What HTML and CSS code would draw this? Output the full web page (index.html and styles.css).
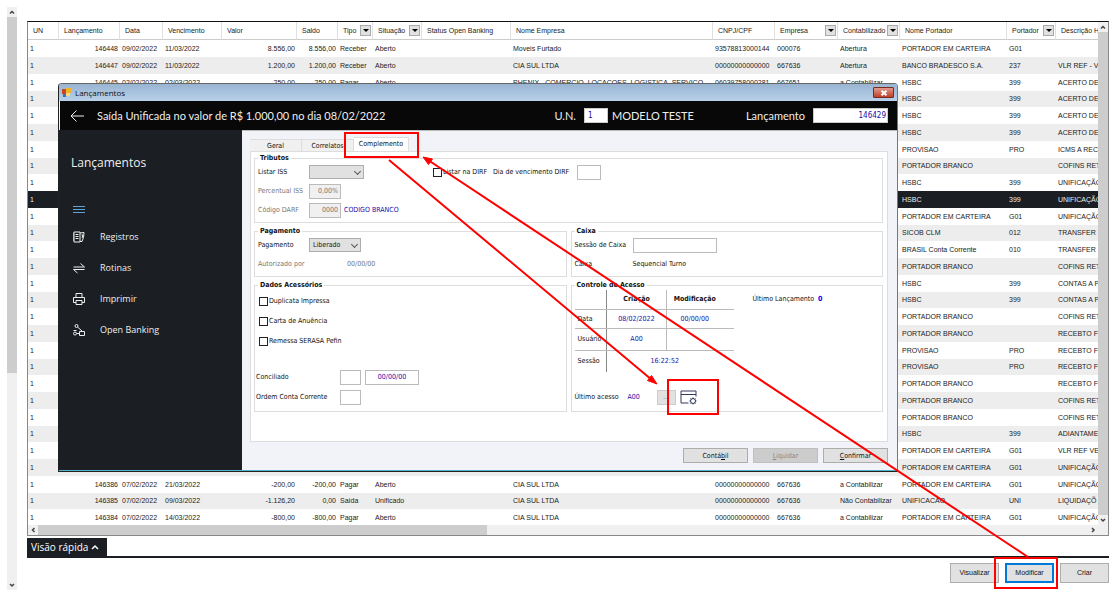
FILE: index.html
```html
<!DOCTYPE html>
<html lang="pt-BR">
<head>
    <meta charset="UTF-8">
    <meta name="viewport" content="width=device-width, initial-scale=1.0">
    <title>Lançamentos</title>
    <link rel="stylesheet" href="styles.css">
</head>
<body>
    <div class="page">
        <div class="scroll-v page-scroll">
            <svg class="chev" viewBox="0 0 10 10"><path d="M3 6.5 5 4.5 7 6.5"/></svg>
            <div class="thumb"></div>
            <svg class="chev chev-end" viewBox="0 0 10 10"><path d="M3 4 5 6 7 4"/></svg>
        </div>

        <main class="main">
            <div class="grid">
                <div class="grid-body">
                    <div class="grid-view">
                        <table class="entries">
                            <colgroup>
                                <col class="c-un"><col class="c-lanc"><col class="c-data"><col class="c-venc">
                                <col class="c-valor"><col class="c-saldo"><col class="c-tipo"><col class="c-sit">
                                <col class="c-status"><col class="c-nome"><col class="c-cnpj"><col class="c-emp">
                                <col class="c-cont"><col class="c-port"><col class="c-cod"><col>
                            </colgroup>
                            <thead>
                                <tr>
                                    <th>UN</th>
                                    <th>Lançamento</th>
                                    <th>Data</th>
                                    <th>Vencimento</th>
                                    <th>Valor</th>
                                    <th>Saldo</th>
                                    <th><div class="th">Tipo<button class="filter" aria-label="Filtrar tipo"></button></div></th>
                                    <th><div class="th">Situação<button class="filter" aria-label="Filtrar situação"></button></div></th>
                                    <th>Status Open Banking</th>
                                    <th>Nome Empresa</th>
                                    <th>CNPJ/CPF</th>
                                    <th><div class="th">Empresa<button class="filter" aria-label="Filtrar empresa"></button></div></th>
                                    <th><div class="th">Contabilizado<button class="filter" aria-label="Filtrar contabilizado"></button></div></th>
                                    <th>Nome Portador</th>
                                    <th><div class="th">Portador<button class="filter" aria-label="Filtrar portador"></button></div></th>
                                    <th>Descrição H</th>
                                </tr>
                            </thead>
                            <tbody id="rows"></tbody>
                        </table>
                    </div>
                    <div class="scroll-v">
                        <svg class="chev" viewBox="0 0 10 10"><path d="M3 6.5 5 4.5 7 6.5"/></svg>
                        <div class="thumb"></div>
                        <svg class="chev chev-end" viewBox="0 0 10 10"><path d="M3 4 5 6 7 4"/></svg>
                    </div>
                </div>
                <div class="scroll-h">
                    <svg class="chev" viewBox="0 0 10 10"><path d="M6.5 3 4.5 5 6.5 7"/></svg>
                    <div class="thumb"></div>
                    <svg class="chev chev-end" viewBox="0 0 10 10"><path d="M4 3 6 5 4 7"/></svg>
                </div>
            </div>

            <div class="quick">
                <button class="quick-tab">Visão rápida
                    <svg viewBox="0 0 8 6"><path d="M1 5 4 2 7 5"/></svg>
                </button>
            </div>

            <div class="actions">
                <button class="btn">Visualizar</button>
                <button class="btn btn-focus">Modificar</button>
                <button class="btn">Criar</button>
            </div>
        </main>
    </div>

    <section class="dialog" role="dialog" aria-label="Lançamentos">
        <div class="titlebar">
            <svg class="app-icon" viewBox="0 0 9 9">
                <rect x="0" y="1" width="4" height="5" fill="#c8452c"/>
                <rect x="4" y="0" width="5" height="5" fill="#f0b429"/>
                <rect x="1" y="6" width="3" height="3" fill="#3a6fc4"/>
                <rect x="4" y="5" width="4" height="3" fill="#f7dc7a"/>
            </svg>
            <span>Lançamentos</span>
            <button class="close" aria-label="Fechar">
                <svg viewBox="0 0 8 6"><path d="M1.5.8 6.5 5.2M6.5.8 1.5 5.2"/></svg>
            </button>
        </div>

        <header class="dialog-head">
            <svg class="back" viewBox="0 0 14 12"><path d="M14 6H1M6.5.5 1 6l5.5 5.5"/></svg>
            <h1>Saída Unificada no valor de R$ 1.000,00 no dia 08/02/2022</h1>
            <label for="un">U.N.</label>
            <input id="un" class="head-un" value="1">
            <span class="head-name">MODELO TESTE</span>
            <label for="lanc">Lançamento</label>
            <input id="lanc" class="head-lanc" value="146429">
        </header>

        <div class="dialog-body">
            <nav class="side">
                <h2>Lançamentos</h2>
                <svg class="menu" viewBox="0 0 12 7"><path d="M0 .5h12M0 3.5h12M0 6.5h12"/></svg>
                <a href="#registros">
                    <svg viewBox="0 0 12 12"><path d="M1 1h6v10H1zM2.5 3.5h3M2.5 5.5h3M2.5 7.5h3M0 2v8M7 2l4-.5-.5 5-1.5 4H7M8.500 4l1.500 0-1 3"/></svg>
                    Registros
                </a>
                <a href="#rotinas">
                    <svg viewBox="0 0 12 12"><path d="M.5 5h11L7.5 1.5M11.5 7.5H.5L4.5 11"/></svg>
                    Rotinas
                </a>
                <a href="#imprimir">
                    <svg viewBox="0 0 12 12"><path d="M3 4.5v-4h6v4M3 9.5H.5v-5h11v5H9M3 7.5h6v4H3z"/></svg>
                    Imprimir
                </a>
                <a href="#open-banking">
                    <svg viewBox="0 0 12 12"><circle cx="3.5" cy="2" r="1.5"/><circle cx="2" cy="9.5" r="1.5"/><path d="M4.5 3 9 7M3.5 9.5h3M6.5 7.5h5v4h-5zM.5 6.5h3"/></svg>
                    Open Banking
                </a>
            </nav>

            <form class="content">
                <div class="tabs" role="tablist">
                    <button type="button" role="tab">Geral</button>
                    <button type="button" role="tab">Correlatos</button>
                    <button type="button" role="tab" class="active" aria-selected="true">Complemento</button>
                </div>

                <div class="panel">
                    <fieldset class="wide">
                        <legend>Tributos</legend>
                        <div class="row">
                            <label class="lbl" for="iss">Listar ISS</label>
                            <span class="select select-iss"><select id="iss"><option></option></select></span>
                            <label class="check dirf"><input type="checkbox">Listar na DIRF</label>
                            <label for="dia">Dia de vencimento DIRF</label>
                            <input id="dia" class="field in-dia">
                        </div>
                        <div class="row">
                            <label class="lbl off" for="perc">Percentual ISS</label>
                            <input id="perc" class="field in-off" value="0,00%" disabled>
                        </div>
                        <div class="row">
                            <label class="lbl off" for="darf">Código DARF</label>
                            <input id="darf" class="field in-off" value="0000" disabled>
                            <span class="val darf-name">CODIGO BRANCO</span>
                        </div>
                    </fieldset>

                    <fieldset>
                        <legend>Pagamento</legend>
                        <div class="row">
                            <label class="lbl" for="pag">Pagamento</label>
                            <span class="select select-pag"><select id="pag"><option>Liberado</option></select></span>
                        </div>
                        <div class="row off">
                            <span class="lbl-auth">Autorizado por</span>
                            <span>00/00/00</span>
                        </div>
                    </fieldset>

                    <fieldset>
                        <legend>Caixa</legend>
                        <div class="row">
                            <label class="lbl-caixa" for="caixa">Sessão de Caixa</label>
                            <input id="caixa" class="field in-caixa">
                        </div>
                        <div class="row">
                            <span class="lbl-caixa">Caixa</span>
                            <span>Sequencial Turno</span>
                        </div>
                    </fieldset>

                    <fieldset class="extras">
                        <legend>Dados Acessórios</legend>
                        <div class="checks">
                            <label class="check"><input type="checkbox">Duplicata Impressa</label>
                            <label class="check"><input type="checkbox">Carta de Anuência</label>
                            <label class="check"><input type="checkbox">Remessa SERASA Pefin</label>
                        </div>
                        <div class="row">
                            <label class="lbl-extra" for="conc">Conciliado</label>
                            <input id="conc" class="field in-mini">
                            <input class="field in-date" value="00/00/00" aria-label="Data conciliado">
                        </div>
                        <div class="row">
                            <label class="lbl-extra" for="ordem">Ordem Conta Corrente</label>
                            <input id="ordem" class="field in-mini">
                        </div>
                    </fieldset>

                    <fieldset class="access">
                        <legend>Controle de Acesso</legend>
                        <div class="access-top">
                            <table class="log">
                                <tr><td></td><th>Criação</th><th>Modificação</th></tr>
                                <tr><td>Data</td><td class="val">08/02/2022</td><td class="val">00/00/00</td></tr>
                                <tr><td>Usuário</td><td class="val">A00</td><td></td></tr>
                                <tr><td>Sessão</td><td class="val" colspan="2">16:22:52</td></tr>
                            </table>
                            <p>Último Lançamento <b>0</b></p>
                        </div>
                        <div class="row">
                            <span class="lbl-last">Último acesso</span>
                            <span class="val last-user">A00</span>
                            <button type="button" class="more">...</button>
                            <svg class="window-icon" viewBox="0 0 17 15">
                                <path d="M8.5 13H1V1h15v5.500M1 4.500h15"/>
                                <circle cx="13" cy="11" r="2.500"/>
                                <path d="M13 7.500v1.500M13 13v1.500M9.500 11H11M15 11h1.500M10.500 8.500l1 1M14.500 12.500l1 1M15.500 8.500l-1 1M11.500 12.500l-1 1"/>
                            </svg>
                        </div>
                    </fieldset>
                </div>

                <div class="dialog-actions">
                    <button type="button" class="btn">Contá<u>b</u>il</button>
                    <button type="button" class="btn" disabled><u>L</u>iquidar</button>
                    <button type="button" class="btn"><u>C</u>onfirmar</button>
                </div>
            </form>
        </div>
    </section>

    <svg class="marks" width="1117" height="595" viewBox="0 0 1117 595" aria-hidden="true">
        <rect x="345" y="133" width="73" height="24"/>
        <rect x="668" y="380" width="50" height="34"/>
        <rect x="995" y="558" width="62" height="30"/>
        <path d="M389 160 652 380M1028 557 428 160"/>
        <path class="tip" d="M657 384 647.5 380.5 651.5 375.5zM423 157 428.5 164.5 432.5 159z"/>
    </svg>

    <script src="script.js"></script>
</body>
</html>
```

FILE: styles.css
```css
* {
    box-sizing: border-box;
}
body {
    margin: 0;
    background: #fff;
    color: #111;
    font-family: "DejaVu Sans Condensed", "DejaVu Sans", sans-serif;
    font-size: 7px;
    line-height: 10px;
}
button,
input,
select {
    font: inherit;
    color: inherit;
    margin: 0;
    padding: 0;
    border-radius: 0;
}
svg {
    fill: none;
    stroke: currentColor;
    flex: none;
}
.page {
    display: flex;
    gap: 10px;
    height: 100vh;
    padding: 7px 8px 5px 7px;
}

/* scrollbars */
.scroll-v {
    display: flex;
    flex-direction: column;
    flex: none;
    width: 10px;
    background: #f0f0f0;
    color: #444;
}
.scroll-h {
    display: flex;
    flex: none;
    height: 10px;
    padding-right: 10px;
    background: #f0f0f0;
    color: #444;
}
.chev {
    width: 10px;
    height: 10px;
    stroke-width: 1.5;
}
.chev-end {
    margin-top: auto;
}
.scroll-h .chev-end {
    margin: 0 0 0 auto;
}
.thumb {
    background: #cdcdcd;
}
.page-scroll .thumb {
    height: 61%;
}
.grid .scroll-v .thumb {
    flex: 1;
}
.scroll-h .thumb {
    width: 42%;
}

/* entries grid */
.main {
    display: flex;
    flex-direction: column;
    flex: 1;
    min-width: 0;
    padding-top: 14px;
}
.grid {
    display: flex;
    flex-direction: column;
    flex: 1;
    min-height: 0;
    border: 1px solid #888;
    border-top-color: #111;
}
.grid-body {
    display: flex;
    flex: 1;
    min-height: 0;
}
.grid-view {
    flex: 1;
    min-width: 0;
    overflow: hidden;
}
.entries {
    width: 100%;
    table-layout: fixed;
    border-collapse: separate;
    border-spacing: 0;
    font-family: "Liberation Sans", Arial, sans-serif;
    color: #222;
}
.c-un { width: 31px; }
.c-lanc { width: 61px; }
.c-data { width: 43px; }
.c-venc { width: 59px; }
.c-valor { width: 75px; }
.c-saldo { width: 41px; }
.c-tipo { width: 35px; }
.c-sit { width: 49px; }
.c-status { width: 89px; }
.c-nome { width: 202px; }
.c-cnpj { width: 62px; }
.c-emp { width: 63px; }
.c-cont { width: 62px; }
.c-port { width: 107px; }
.c-cod { width: 49px; }
.entries th {
    height: 18px;
    padding: 0 0 0 5px;
    border-right: 1px solid #e0e0e0;
    border-bottom: 1px solid #ccc;
    font-weight: normal;
    text-align: left;
    white-space: nowrap;
    overflow: hidden;
}
.entries th:last-child {
    border-right: 0;
}
.th {
    display: flex;
    justify-content: space-between;
    align-items: center;
    padding-right: 1px;
}
.filter {
    display: grid;
    place-items: center;
    width: 11px;
    height: 11px;
    border: 1px solid #aaa;
    background: #e1e1e1;
}
.filter::after {
    content: "";
    border: 3px solid transparent;
    border-top-color: #000;
    border-bottom: 0;
}
.entries td {
    height: 17px;
    padding: 0 2px;
    white-space: nowrap;
    overflow: hidden;
}
.entries tr:nth-child(4n) td {
    height: 16px;
}
.entries tbody tr:nth-child(even) {
    background: #ededed;
}
.entries tbody tr.selected {
    background: #1b1e23;
    color: #eee;
}
.entries .num {
    text-align: right;
}

/* quick view and page buttons */
.quick {
    margin-top: 2px;
    border-bottom: 2px solid #1b1e23;
}
.quick-tab {
    display: flex;
    align-items: center;
    gap: 3px;
    height: 18px;
    padding: 0 8px 0 4px;
    border: 0;
    background: #1b1e23;
    color: #fff;
    font-family: "Open Sans", sans-serif;
    font-size: 10px;
}
.quick-tab svg {
    width: 8px;
    height: 6px;
    stroke-width: 1.5;
}
.actions {
    display: flex;
    justify-content: flex-end;
    gap: 6px;
    padding: 5px 0 7px;
}
.btn {
    border: 1px solid #adadad;
    background: #e1e1e1;
    text-align: center;
}
.actions .btn {
    width: 49px;
    height: 20px;
    font-family: "Liberation Sans", Arial, sans-serif;
}
.actions .btn-focus {
    border: 2px solid #0078d7;
}

/* dialog */
.dialog {
    position: absolute;
    top: 83px;
    left: 58px;
    right: 219px;
    border: 1px solid #222;
    border-top-color: #666;
    border-right-color: #3b8ba5;
    border-radius: 4px 4px 0 0;
    background: #f2f3f8;
}
.titlebar {
    display: flex;
    align-items: center;
    gap: 4px;
    height: 17px;
    padding: 0 3px;
    border-radius: 3px 3px 0 0;
    background: linear-gradient(#98b4d2, #b9d1ea);
    font-family: "Open Sans", sans-serif;
    font-size: 8px;
}
.app-icon {
    width: 9px;
    height: 9px;
    stroke: none;
}
.close {
    display: grid;
    place-items: center;
    width: 21px;
    height: 11px;
    margin-left: auto;
    border: 1px solid #7b2a20;
    border-radius: 1px;
    background: linear-gradient(#e09a8c, #c0402a);
    color: #fff;
}
.close svg {
    width: 8px;
    height: 6px;
    stroke-width: 2;
}
.dialog-head {
    display: flex;
    align-items: center;
    height: 29px;
    margin-left: 1px;
    padding: 0 9px 0 10px;
    background: #080808;
    color: #eee;
    font-family: Lato, "Open Sans", sans-serif;
    font-size: 11px;
}
.back {
    width: 14px;
    height: 12px;
}
.dialog-head h1 {
    flex: 1;
    margin: 0 0 0 13px;
    font-size: inherit;
    font-weight: normal;
    white-space: nowrap;
}
.dialog-head input {
    height: 15px;
    padding: 0 3px;
    border: 1px solid #ccc;
    background: #fff;
    color: #1a0dab;
    font-family: "DejaVu Sans Condensed", "DejaVu Sans", sans-serif;
    font-size: 8px;
}
.dialog-head .head-un {
    width: 24px;
    margin: 0 4px 0 8px;
}
.head-name {
    width: 134px;
    white-space: nowrap;
}
.dialog-head .head-lanc {
    width: 75px;
    margin-left: 8px;
    padding-right: 1px;
    text-align: right;
}
.dialog-body {
    display: flex;
    border-top: 1px solid #bbb;
    border-bottom: 1px solid #4fb3cc;
}

/* side menu */
.side {
    display: flex;
    flex-direction: column;
    flex: none;
    width: 183px;
    margin-top: -1px;
    padding: 24px 12px 0;
    background: #1b1e23;
    color: #eee;
    font-family: "Open Sans", sans-serif;
}
.side h2 {
    margin: 0;
    font-size: 12px;
    line-height: 18px;
    font-weight: normal;
}
.menu {
    width: 12px;
    height: 7px;
    margin: 34px 0 12px 2px;
    color: #5fa3d8;
}
.side a {
    display: flex;
    align-items: center;
    gap: 15px;
    height: 24px;
    margin-bottom: 7px;
    padding-left: 2px;
    color: inherit;
    font-size: 9px;
    text-decoration: none;
}
.side a svg {
    width: 12px;
    height: 12px;
}

/* form */
.content {
    flex: 1;
    min-width: 0;
    padding: 6px 9px 7px 8px;
}
.tabs {
    display: flex;
    align-items: flex-end;
}
.tabs button {
    width: 52px;
    height: 12px;
    border: 1px solid #ddd;
    border-width: 1px 1px 0 0;
    background: #f0f0f0;
}
.tabs .active {
    width: 55px;
    height: 14px;
    padding-bottom: 2px;
    background: #fff;
}
.panel {
    display: grid;
    grid-template-columns: 1fr 1fr;
    gap: 3px 4px;
    padding: 1px 4px 29px 3px;
    border: 1px solid #ddd;
    background: #fff;
}
fieldset {
    display: flex;
    flex-direction: column;
    gap: 5px;
    min-width: 0;
    margin: 0;
    padding: 2px 3px 5px;
    border: 1px solid #ddd;
}
legend {
    padding: 0 2px;
    font-weight: bold;
}
.wide {
    grid-column: 1 / -1;
}
.row {
    display: flex;
    align-items: center;
    height: 14px;
    white-space: nowrap;
}
.field {
    height: 15px;
    padding: 0 2px;
    border: 1px solid #bbb;
    background: #fff;
    color: #1a0dab;
}
.lbl {
    width: 51px;
}
.lbl-auth {
    width: 89px;
}
.lbl-caixa {
    width: 58px;
}
.lbl-extra {
    width: 84px;
}
.off {
    color: #777;
}
.val {
    color: #1a0dab;
}
.darf-name {
    margin-left: 3px;
}
.select {
    position: relative;
}
.select select {
    display: block;
    width: 100%;
    height: 14px;
    padding: 0 3px;
    border: 1px solid #adadad;
    background: #e1e1e1;
    appearance: none;
}
.select::after {
    content: "";
    position: absolute;
    top: 4px;
    right: 4px;
    width: 4px;
    height: 4px;
    border: solid #555;
    border-width: 0 1px 1px 0;
    transform: rotate(45deg);
}
.select-iss {
    width: 55px;
}
.select-pag {
    width: 52px;
}
.check {
    display: flex;
    align-items: center;
    height: 14px;
}
.check input {
    appearance: none;
    width: 9px;
    height: 9px;
    margin-right: 1px;
    border: 1px solid #222;
    background: #fff;
}
.dirf {
    margin: 0 6px 0 69px;
}
.in-dia {
    width: 24px;
    margin-left: 8px;
}
.in-off {
    width: 32px;
    background: #f0f0f0;
    color: #777;
    text-align: right;
}
.in-caixa {
    width: 84px;
}
.extras {
    gap: 6px;
    padding: 4px 1px 7px;
}
.checks {
    display: flex;
    flex-direction: column;
    gap: 6px;
    padding-left: 3px;
    margin-bottom: 16px;
}
.extras legend {
    margin-left: 2px;
}
.in-mini {
    width: 21px;
}
.in-date {
    width: 54px;
    margin-left: 4px;
    text-align: center;
}
.access {
    justify-content: space-between;
    padding: 0 3px 7px;
}
.access-top {
    display: flex;
    gap: 19px;
}
.access-top p {
    margin: 4px 0;
}
.access-top b {
    margin-left: 2px;
    color: #00f;
}
.log {
    border-collapse: collapse;
}
.log th,
.log td {
    height: 19px;
    padding: 0;
    border: 1px solid #bbb;
    text-align: center;
}
.log tr:nth-child(n+3) td {
    height: 22px;
}
.log tr:first-child > * {
    border-top: 0;
}
.log tr:last-child > * {
    border-bottom: 0;
}
.log tr > :last-child {
    width: 67px;
    padding-right: 11px;
    border-right: 0;
}
.log tr > :nth-child(2) {
    width: 60px;
}
.log tr > :first-child {
    width: 32px;
    padding-left: 3px;
    border-left: 0;
    border-right-color: #888;
    text-align: left;
}
.lbl-last {
    width: 53px;
}
.last-user {
    width: 29px;
}
.more {
    width: 19px;
    height: 15px;
    border: 1px solid #ccc;
    background: #e1e1e1;
    color: #777;
}
.window-icon {
    width: 17px;
    height: 15px;
    margin-left: 4px;
    color: #33395c;
}
.dialog-actions {
    display: flex;
    justify-content: flex-end;
    gap: 5px;
    margin-top: 6px;
}
.dialog-actions .btn {
    width: 65px;
    height: 15px;
}
.dialog-actions .btn:disabled {
    background: #ccc;
    border-color: #bfbfbf;
    color: #888;
}

/* how-to marks over the screen */
.marks {
    position: absolute;
    top: 0;
    left: 0;
    stroke: #f00;
    stroke-width: 2;
    pointer-events: none;
}
.marks .tip {
    fill: #f00;
    stroke-width: 1;
}
```

FILE: script.js
```js
// un, lançamento, data, vencimento, valor, saldo, tipo, situação, status, nome, cnpj, empresa, contabilizado
const full = {
    0: ['1', '146448', '09/02/2022', '11/03/2022', '8.556,00', '8.556,00', 'Receber', 'Aberto', '', 'Moveis Furtado', '93578813000144', '000076', 'Abertura'],
    1: ['1', '146447', '09/02/2022', '11/03/2022', '1.200,00', '1.200,00', 'Receber', 'Aberto', '', 'CIA SUL LTDA', '00000000000000', '667636', 'Abertura'],
    2: ['1', '146445', '02/02/2022', '02/03/2022', '-250,00', '-250,00', 'Pagar', 'Aberto', '', 'PHENIX - COMERCIO, LOCACOES, LOGISTICA, SERVICO', '06039758000281', '667651', 'a Contabilizar'],
    26: ['1', '146386', '07/02/2022', '21/03/2022', '-200,00', '-200,00', 'Pagar', 'Aberto', '', 'CIA SUL LTDA', '00000000000000', '667636', 'a Contabilizar'],
    27: ['1', '146385', '07/02/2022', '09/03/2022', '-1.126,20', '0,00', 'Saída', 'Unificado', '', 'CIA SUL LTDA', '00000000000000', '667636', 'Não Contabilizar'],
    28: ['1', '146384', '07/02/2022', '14/03/2022', '-800,00', '-800,00', 'Pagar', 'Aberto', '', 'CIA SUL LTDA', '00000000000000', '667636', 'a Contabilizar']
};

// nome portador, portador, descrição
const holders = [
    ['PORTADOR EM CARTEIRA', 'G01', ''],
    ['BANCO BRADESCO S.A.', '237', 'VLR REF - V'],
    ['HSBC', '399', 'ACERTO DE'],
    ['HSBC', '399', 'ACERTO DE'],
    ['HSBC', '399', 'ACERTO DE'],
    ['HSBC', '399', 'ACERTO DE'],
    ['PROVISAO', 'PRO', 'ICMS A REC'],
    ['PORTADOR BRANCO', '', 'COFINS RET'],
    ['HSBC', '399', 'UNIFICAÇÃO'],
    ['HSBC', '399', 'UNIFICAÇÃO'],
    ['PORTADOR EM CARTEIRA', 'G01', 'UNIFICAÇÃO'],
    ['SICOB CLM', '012', 'TRANSFER'],
    ['BRASIL Conta Corrente', '010', 'TRANSFER'],
    ['PORTADOR BRANCO', '', 'COFINS RET'],
    ['HSBC', '399', 'CONTAS A P'],
    ['HSBC', '399', 'CONTAS A P'],
    ['PORTADOR BRANCO', '', 'COFINS RET'],
    ['PORTADOR BRANCO', '', 'RECEBTO F'],
    ['PROVISAO', 'PRO', 'RECEBTO F'],
    ['PROVISAO', 'PRO', 'RECEBTO F'],
    ['PORTADOR BRANCO', '', 'RECEBTO F'],
    ['PORTADOR BRANCO', '', 'COFINS RET'],
    ['PORTADOR BRANCO', '', 'COFINS RET'],
    ['HSBC', '399', 'ADIANTAME'],
    ['PORTADOR EM CARTEIRA', 'G01', 'VLR REF VE'],
    ['PORTADOR EM CARTEIRA', 'G01', 'UNIFICAÇÃO'],
    ['PORTADOR EM CARTEIRA', 'G01', 'UNIFICAÇÃO'],
    ['UNIFICACAO', 'UNI', 'LIQUIDAÇÕ'],
    ['PORTADOR EM CARTEIRA', 'G01', 'UNIFICAÇÃO']
];

const numeric = [1, 4, 5];
const selected = 9;
const body = document.getElementById('rows');

holders.forEach(function(holder, i) {
    const left = full[i] || ['1', '', '', '', '', '', '', '', '', '', '', '', ''];
    const tr = body.insertRow();
    if (i === selected) tr.className = 'selected';
    left.concat(holder).forEach(function(text, c) {
        const td = tr.insertCell();
        td.textContent = text;
        if (numeric.includes(c)) td.className = 'num';
    });
});
```
